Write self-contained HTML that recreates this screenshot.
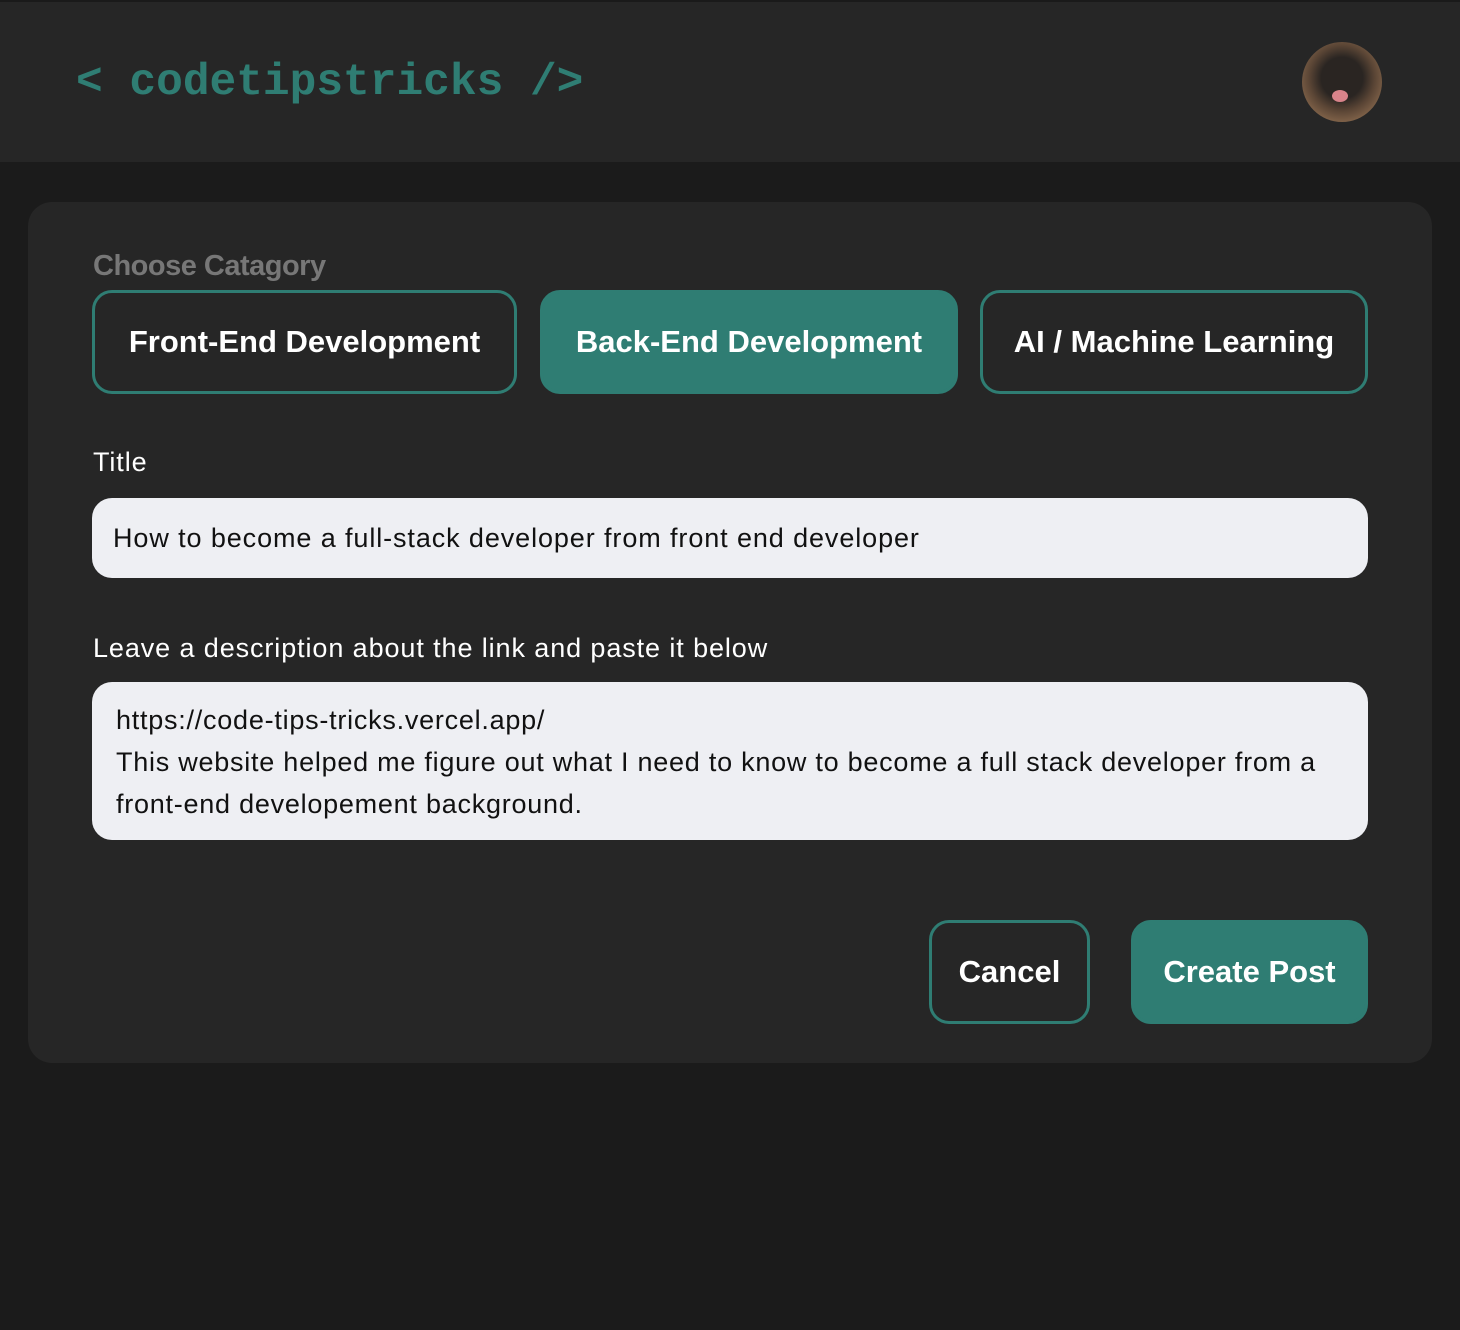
<!DOCTYPE html><html><head><style>
body{margin:0;width:1460px;height:1330px;background:#1b1b1b;font-family:"Liberation Sans",sans-serif;position:relative;overflow:hidden}
.hdr{position:absolute;left:0;top:0;width:1460px;height:162px;background:#262626;border-top:2px solid #1a1a1a;box-sizing:border-box}
.logo{position:absolute;left:76px;top:53px;font-family:"Liberation Mono",monospace;font-size:44.5px;color:#2f7d73;font-weight:bold;letter-spacing:0px;line-height:60px;white-space:pre}
.av{position:absolute;left:1302px;top:42px;width:80px;height:80px;border-radius:50%;background:radial-gradient(circle at 50% 45%,#2a2522 0 35%,#5a4535 55%,#8a6a4e 80%)}
.av:after{content:"";position:absolute;left:30px;top:48px;width:16px;height:12px;border-radius:50%;background:#d9838a}
.card{position:absolute;left:28px;top:202px;width:1404px;height:861px;background:#262626;border-radius:24px}
.a{position:absolute;box-sizing:border-box}
.lbl{font-size:29px;color:#777;font-weight:bold;letter-spacing:-0.5px}
.btn{border:3px solid #2f7d73;border-radius:20px;color:#fff;font-weight:bold;font-size:31px;display:flex;align-items:center;justify-content:center;height:104px;top:290px}
.f{background:#2f7d73}
.t{color:#fff;font-size:27px;letter-spacing:0.9px}
.in{background:#eeeff3;border-radius:20px;color:#111;font-size:27px;letter-spacing:0.9px}
</style></head><body>
<div class="hdr"></div>
<div class="logo">&lt; codetipstricks /&gt;</div>
<div class="av"></div>
<div class="card"></div>
<div class="a lbl" style="left:93px;top:250px">Choose Catagory</div>
<div class="a btn" style="left:92px;width:425px">Front-End Development</div>
<div class="a btn f" style="left:540px;width:418px">Back-End Development</div>
<div class="a btn" style="left:980px;width:388px">AI / Machine Learning</div>
<div class="a t" style="left:93px;top:447px">Title</div>
<div class="a in" style="left:92px;top:498px;width:1276px;height:80px;padding:25px 21px;line-height:30px">How to become a full-stack developer from front end developer</div>
<div class="a t" style="left:93px;top:633px">Leave a description about the link and paste it below</div>
<div class="a in" style="left:92px;top:682px;width:1276px;height:158px;padding:17px 10px 0 24px;line-height:42px;white-space:nowrap;letter-spacing:0.75px">https://code-tips-tricks.vercel.app/<br>This website helped me figure out what I need to know to become a full stack developer from a<br>front-end developement background.</div>
<div class="a btn" style="left:929px;top:920px;width:161px">Cancel</div>
<div class="a btn f" style="left:1131px;top:920px;width:237px">Create Post</div>
</body></html>
